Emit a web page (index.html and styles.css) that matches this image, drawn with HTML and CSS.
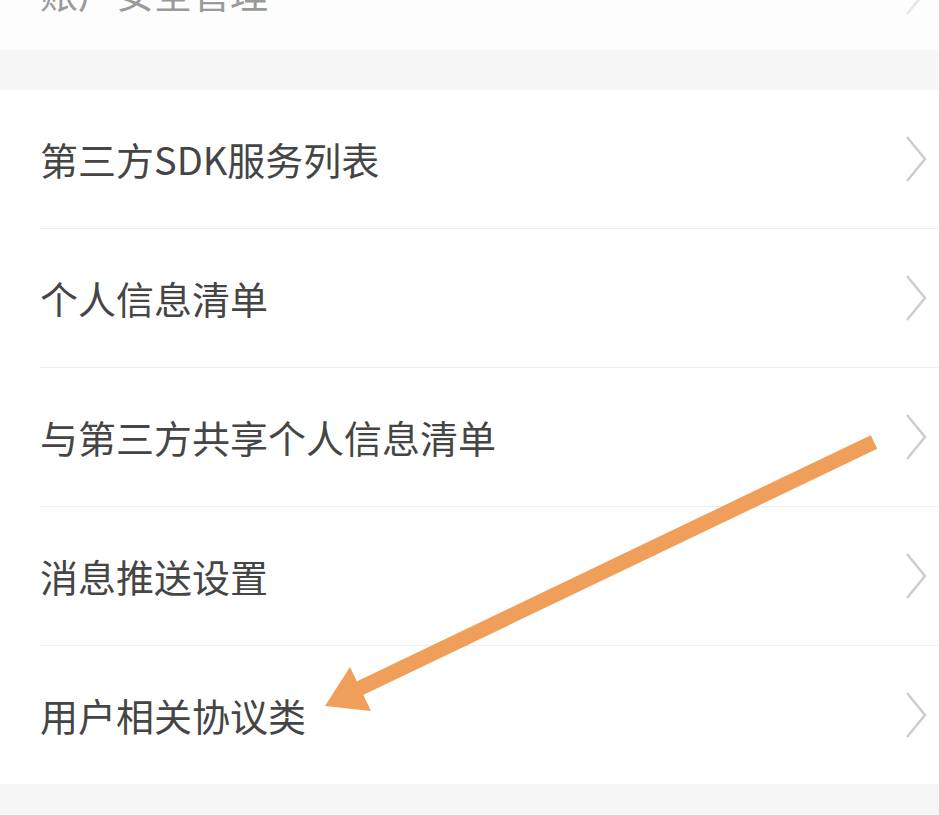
FILE: index.html
```html
<!DOCTYPE html>
<html lang="zh-CN">
<head>
<meta charset="utf-8">
<title>设置</title>
<link rel="stylesheet" href="styles.css">
</head>
<body>
<div class="page">
  <div class="card card-top">
    <div class="row row-top">
      <span class="label">账户安全管理</span>
      <svg class="chev" viewBox="0 0 24 50" width="24" height="50"><polyline points="3,3 21,25 3,47"/></svg>
    </div>
  </div>
  <div class="gap"></div>
  <div class="card">
    <div class="row"><span class="label">第三方SDK服务列表</span><svg class="chev" viewBox="0 0 24 50" width="24" height="50"><polyline points="3,3 21,25 3,47"/></svg></div>
    <div class="row"><span class="label">个人信息清单</span><svg class="chev" viewBox="0 0 24 50" width="24" height="50"><polyline points="3,3 21,25 3,47"/></svg></div>
    <div class="row"><span class="label">与第三方共享个人信息清单</span><svg class="chev" viewBox="0 0 24 50" width="24" height="50"><polyline points="3,3 21,25 3,47"/></svg></div>
    <div class="row"><span class="label">消息推送设置</span><svg class="chev" viewBox="0 0 24 50" width="24" height="50"><polyline points="3,3 21,25 3,47"/></svg></div>
    <div class="row"><span class="label">用户相关协议类</span><svg class="chev" viewBox="0 0 24 50" width="24" height="50"><polyline points="3,3 21,25 3,47"/></svg></div>
  </div>
</div>
<svg class="arrow" viewBox="0 0 939 815" width="939" height="815">
  <line x1="874" y1="442" x2="352" y2="692"/>
  <polygon points="325,706 350,667 371,711"/>
</svg>
</body>
</html>
```
FILE: styles.css
```css
html, body {
  margin: 0;
  padding: 0;
}
body {
  width: 939px;
  height: 815px;
  overflow: hidden;
  background: #f5f5f5;
  font-family: "Noto Sans CJK SC", "Noto Sans", sans-serif;
  position: relative;
}
.page {
  margin-top: -66px;
}
.card {
  background: #ffffff;
}
.card-top {
  background: #fdfdfd;
}
.gap {
  height: 40px;
  background: #f7f7f7;
}
.row {
  height: 138px;
  margin-left: 40px;
  padding-right: 11px;
  display: flex;
  align-items: center;
  justify-content: space-between;
  border-bottom: 1px solid #efefef;
}
.row:last-child {
  border-bottom: none;
}
.row-top {
  height: 116px;
  border-bottom: none;
}
.label {
  font-size: 38px;
  color: #454545;
  line-height: 1;
}
.row-top .label {
  color: #9a9a9a;
}
.chev polyline {
  fill: none;
  stroke: #cdcdcd;
  stroke-width: 2.5;
}
.row-top .chev polyline {
  stroke: #e6e6e6;
}
.arrow {
  position: absolute;
  left: 0;
  top: 0;
  pointer-events: none;
}
.arrow line {
  stroke: #ef9f5a;
  stroke-width: 15;
}
.arrow polygon {
  fill: #ef9f5a;
}
```
